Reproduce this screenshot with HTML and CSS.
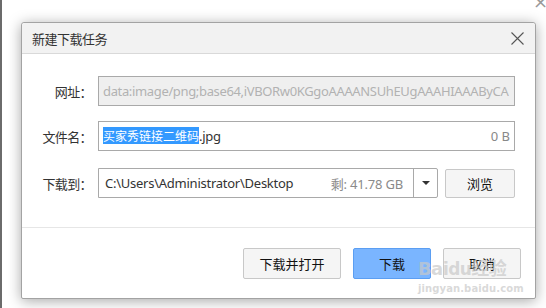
FILE: index.html
```html
<!DOCTYPE html>
<html>
<head>
<meta charset="utf-8">
<link rel="stylesheet" href="styles.css">
</head>
<body>
<div class="bg-strip"></div>
<div class="bg-close">×</div>
<div class="dialog">
  <div class="titlebar">
    <span class="title">新建下载任务</span>
    <svg class="close" width="13" height="13" viewBox="0 0 13 13"><path d="M0.5 0.5 L12.5 12.5 M12.5 0.5 L0.5 12.5" stroke="#555" stroke-width="1.1" fill="none"/></svg>
  </div>
  <div class="body">
    <div class="row">
      <label class="lbl">网址：</label>
      <div class="field disabled"><span class="txt">data:image/png;base64,iVBORw0KGgoAAAANSUhEUgAAAHIAAAByCA</span></div>
    </div>
    <div class="row">
      <label class="lbl">文件名：</label>
      <div class="field"><span class="txt"><span class="sel">买家秀链接二维码</span>.jpg</span><span class="size">0 B</span></div>
    </div>
    <div class="row row3">
      <label class="lbl">下载到：</label>
      <div class="combo">
        <div class="combo-main"><span class="txt">C:\Users\Administrator\Desktop</span><span class="free">剩: 41.78 GB</span></div>
        <div class="combo-arrow"><span class="tri"></span></div>
      </div>
      <button class="btn browse">浏览</button>
    </div>
  </div>
  <div class="footer">
    <button class="btn big">下载并打开</button>
    <button class="btn small primary">下载</button>
    <button class="btn small">取消</button>
  </div>
  <div class="watermark"><div class="wm1">Bai<span class="paw">du</span>经验</div><div class="wm2">jingyan.baidu.com</div></div>
</div>
</body>
</html>
```

FILE: styles.css
```css
html, body {
  margin: 0;
  padding: 0;
  background: #ffffff;
  width: 546px;
  height: 308px;
  overflow: hidden;
  font-family: "Noto Sans", "Noto Sans CJK SC", sans-serif;
  color: #333;
}
body { position: relative; }
.bg-strip {
  position: absolute;
  left: 0; top: 0;
  width: 2px; height: 308px;
  background: #6b6b6b;
}
.bg-close {
  position: absolute;
  left: 533px; top: -9px;
  font-size: 18px;
  color: #999;
  font-family: "DejaVu Sans", sans-serif;
}
.dialog {
  position: absolute;
  left: 21px; top: 22px;
  width: 513px; height: 275px;
  background: #fff;
  border: 1px solid #a3a3a3;
  border-radius: 3px 3px 2px 2px;
  box-shadow: 0 2px 14px rgba(0,0,0,0.35);
  display: flex;
  flex-direction: column;
}
.titlebar {
  height: 30px;
  background: #f2f2f2;
  border-bottom: 1px solid #d9d9d9;
  border-radius: 3px 3px 0 0;
  display: flex;
  align-items: center;
  justify-content: space-between;
  padding: 0 11px 0 10px;
}
.title {
  font-family: "Noto Sans CJK SC", sans-serif;
  font-size: 13px;
  color: #333;
  letter-spacing: -0.5px;
}
.close { margin-top: 1px; }
.body {
  flex: 1;
  padding: 22px 20px 0 0;
  border-bottom: 1px solid #e6e6e6;
  display: flex;
  flex-direction: column;
}
.row {
  display: flex;
  align-items: center;
  height: 30px;
  margin-bottom: 15px;
}
.row3 { margin-top: 2px; }
.lbl {
  width: 70px;
  flex: none;
  text-align: right;
  margin-right: 6px;
  font-family: "Noto Sans CJK SC", sans-serif;
  font-size: 13px;
  color: #333;
  letter-spacing: -0.6px;
}
.field {
  flex: 1;
  height: 28px;
  border: 1px solid #a9a9a9;
  background: #fff;
  display: flex;
  align-items: center;
  justify-content: space-between;
  padding: 0 4px 0 4px;
  font-size: 13px;
  white-space: nowrap;
  overflow: hidden;
}
.field.disabled {
  background: #efefef;
  color: #b2b2b2;
}
.txt { letter-spacing: -0.25px; }
.disabled .txt { letter-spacing: -0.35px; }
.sel {
  background: #3399ff;
  color: #fff;
  font-family: "Noto Sans CJK SC", sans-serif;
  font-size: 12px;
  letter-spacing: 0;
}
.size { color: #888; }
.combo {
  flex: 1;
  height: 28px;
  border: 1px solid #a9a9a9;
  border-radius: 0 2px 2px 0;
  display: flex;
  font-size: 13px;
}
.combo-main {
  flex: 1;
  display: flex;
  align-items: center;
  justify-content: space-between;
  padding: 0 10px 0 6px;
  white-space: nowrap;
  border-right: 1px solid #a9a9a9;
}
.free { color: #8a8a8a; letter-spacing: -0.2px; }
.combo-arrow {
  width: 23px;
  display: flex;
  align-items: center;
  justify-content: center;
}
.tri {
  width: 0; height: 0;
  border-left: 4px solid transparent;
  border-right: 4px solid transparent;
  border-top: 4px solid #333;
}
.btn {
  font-family: "Noto Sans CJK SC", sans-serif;
  font-size: 13px;
  color: #111;
  background: #f5f5f5;
  border: 1px solid #c8c8c8;
  border-radius: 2px;
  padding: 0;
  box-sizing: border-box;
}
.browse {
  width: 70px;
  height: 29px;
  margin-left: 7px;
}
.footer {
  height: 70px;
  display: flex;
  justify-content: flex-end;
  align-items: flex-start;
  gap: 12px;
  padding: 20px 14px 0 0;
  box-sizing: border-box;
}
.big {
  width: 98px;
  height: 31px;
}
.small {
  width: 78px;
  height: 31px;
}
.primary {
  background: #7ab5ff;
  border-color: #5b9ef2;
}
.watermark {
  position: absolute;
  left: 396px; top: 236px;
  color: rgba(200,200,200,0.7);
  font-family: "DejaVu Sans", "Noto Sans CJK SC", sans-serif;
  font-weight: bold;
  white-space: nowrap;
  pointer-events: none;
}
.wm1 { font-size: 18px; letter-spacing: -0.6px; line-height: 20px; }
.wm1 .paw { font-size: 17px; }
.wm2 { font-size: 10px; margin-top: 4px; letter-spacing: 0.1px; }
```
